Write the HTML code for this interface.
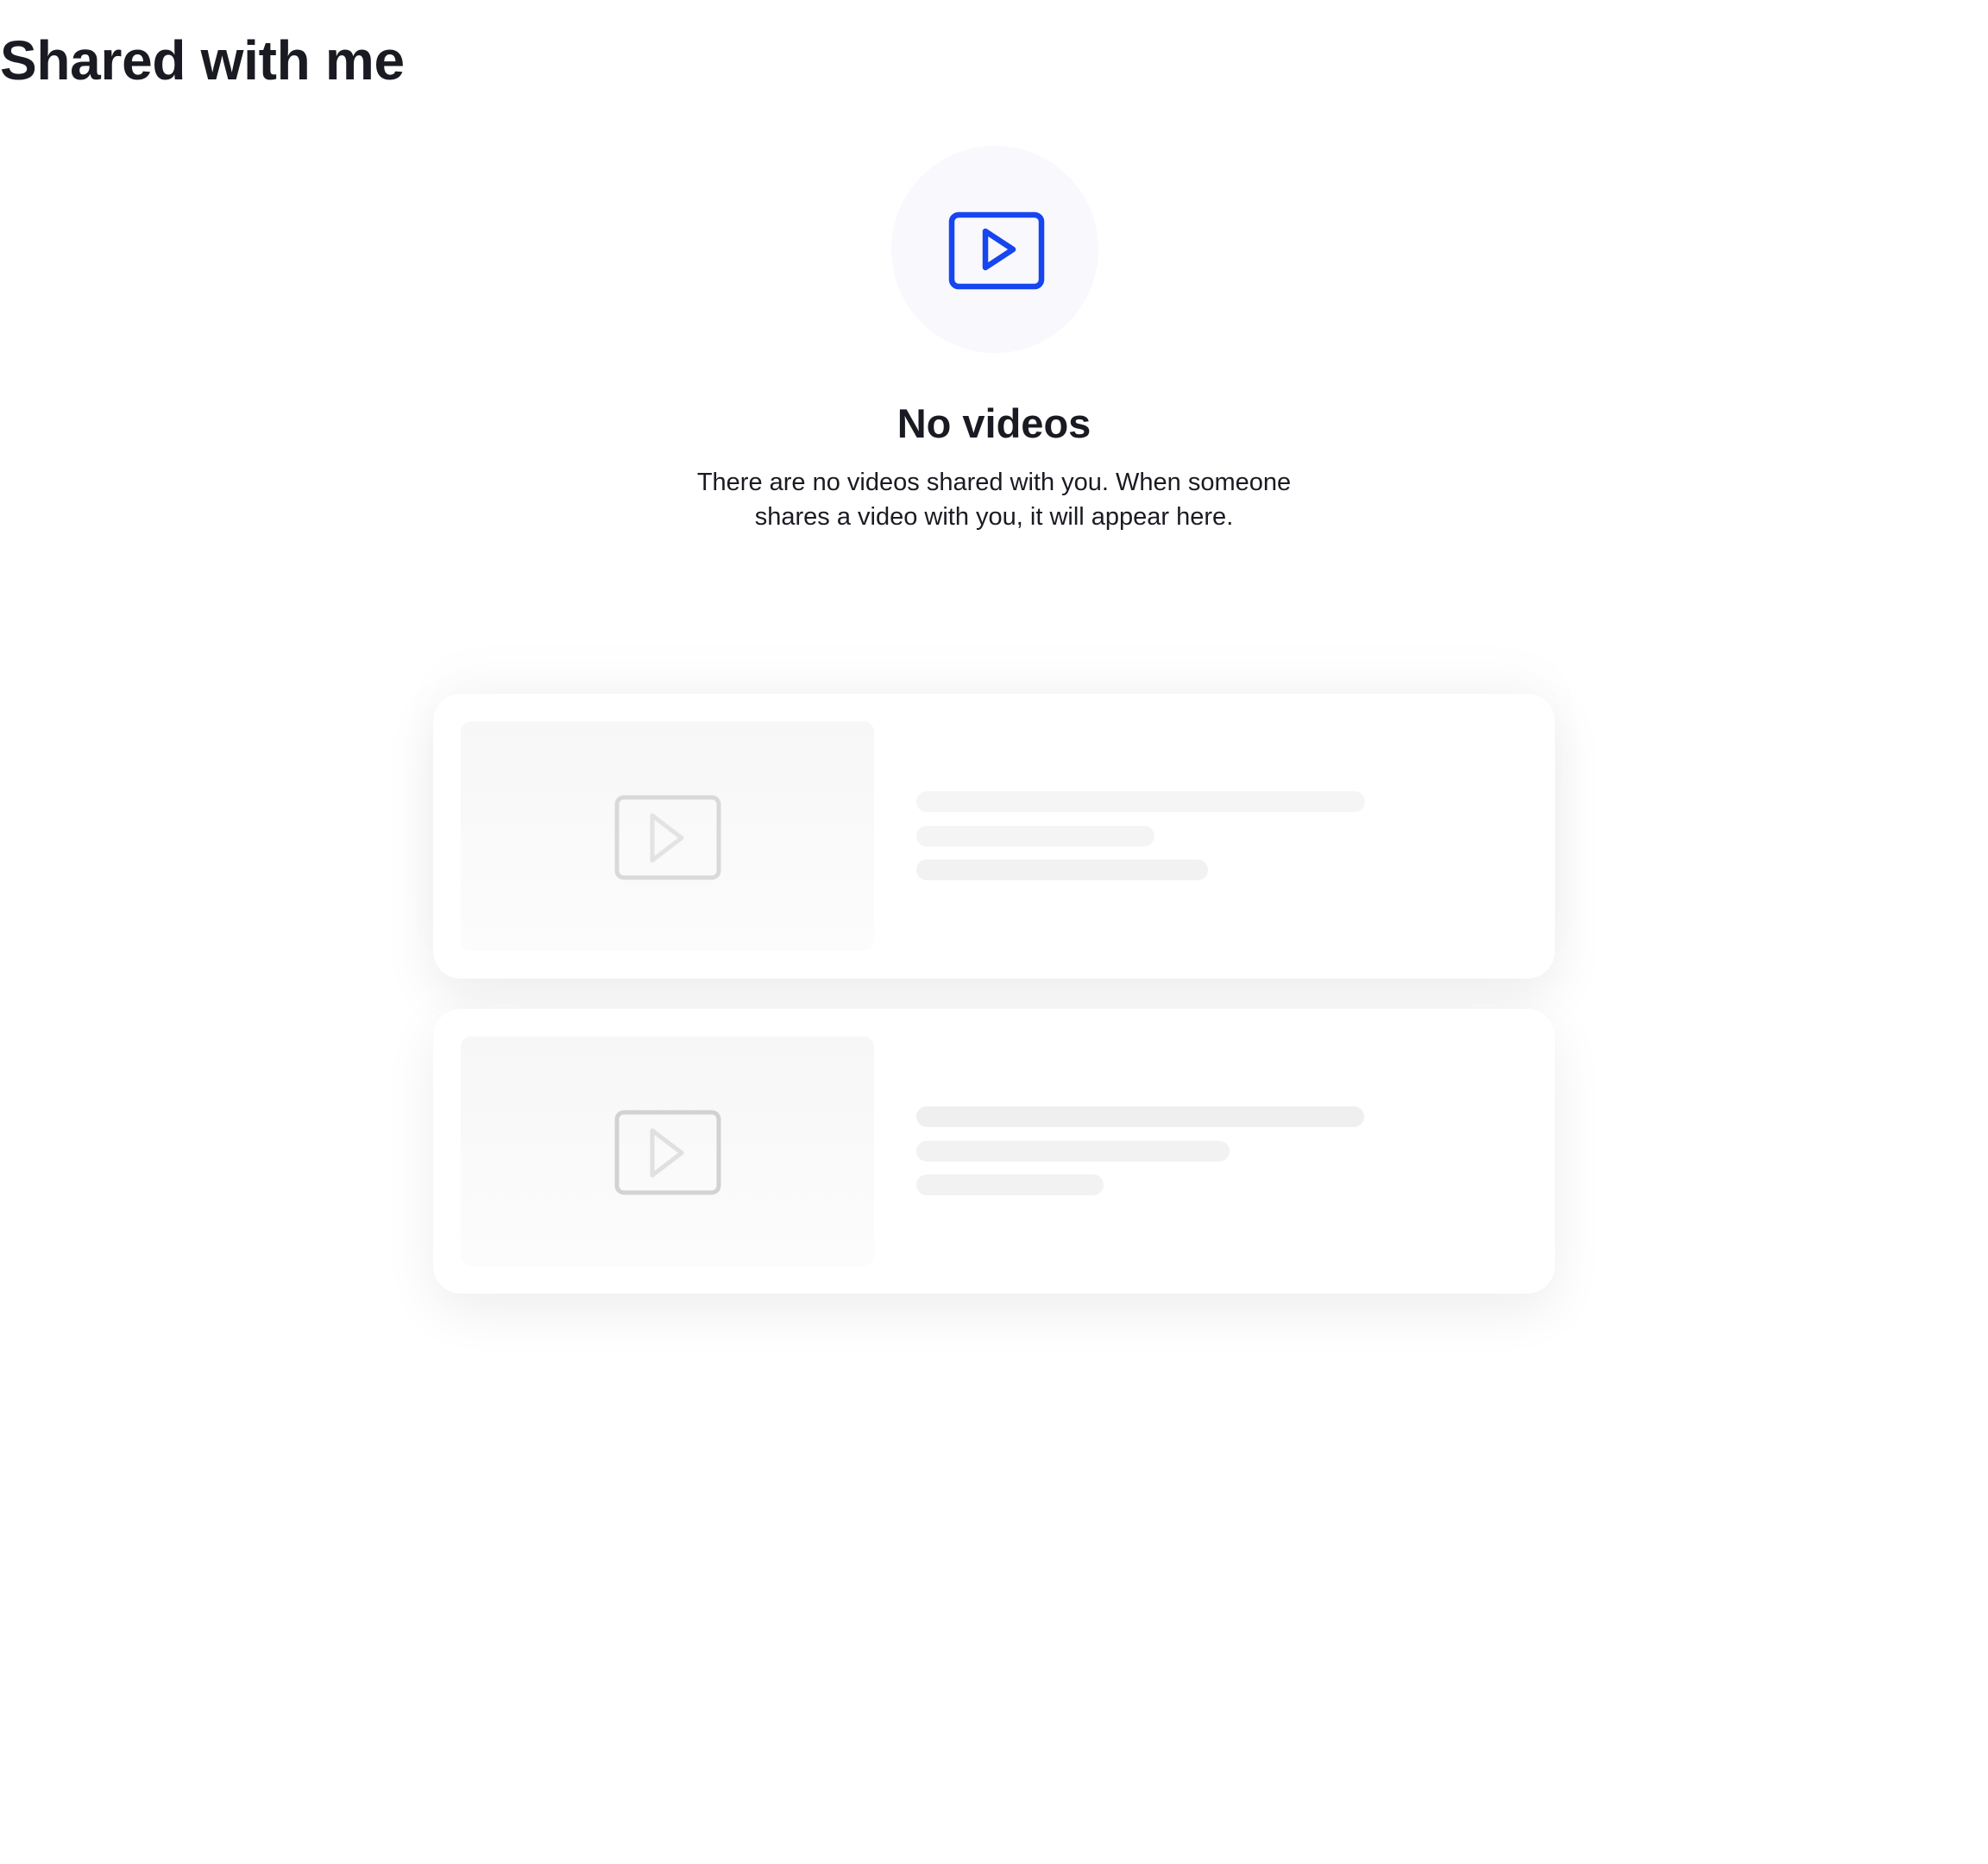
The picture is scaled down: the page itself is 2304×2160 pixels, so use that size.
<!DOCTYPE html>
<html><head><meta charset="utf-8"><style>
body{margin:0;width:2304px;height:2160px;background:#fff;position:relative;overflow:hidden;font-family:"Liberation Sans",sans-serif;color:#1a1a22}
h1{position:absolute;left:0;top:33px;margin:0;font-size:64px;font-weight:700;letter-spacing:-0.3px}
.circle{position:absolute;left:1033px;top:169px;width:240px;height:240px;border-radius:50%;background:#f8f8fd}
.t{position:absolute;left:0;width:2304px;text-align:center}
.card{position:absolute;left:502px;width:1300px;height:330px;border-radius:32px;background:#fff;box-shadow:0 20px 60px rgba(0,0,0,0.07)}
.thumb{position:absolute;left:32px;top:32px;width:479px;height:266px;border-radius:12px;background:linear-gradient(#f7f7f7,#fcfcfc)}
.bar{position:absolute;left:560px;height:24px;border-radius:12px;background:#f2f2f2}
</style></head><body>
<h1>Shared with me</h1>
<div class="circle"></div>
<svg style="position:absolute;left:1090px;top:236px" width="130" height="110"><rect x="13" y="13" width="104" height="83" rx="8" fill="none" stroke="#1746f0" stroke-width="6.5"/><path d="M52 32 L84 53 L52 74 Z" fill="none" stroke="#1746f0" stroke-width="6.5" stroke-linejoin="round"/></svg>
<div class="t" style="top:463px;font-size:47px;font-weight:700">No videos</div>
<div class="t" style="top:539px;font-size:29px;line-height:40px">There are no videos shared with you. When someone<br>shares a video with you, it will appear here.</div>
<div class="card" style="top:804px;box-shadow:0 20px 60px rgba(0,0,0,0.08),0 -30px 60px rgba(0,0,0,0.02)">
<div class="thumb"><svg style="position:absolute;left:176px;top:83px" width="130" height="104"><rect x="5" y="5" width="118" height="93" rx="8" fill="none" stroke="#d9d9d9" stroke-width="5"/><path d="M46 26 L80 52 L46 78 Z" fill="none" stroke="#e3e3e3" stroke-width="5" stroke-linejoin="round"/></svg></div>
<div class="bar" style="top:113px;width:520px;background:#f5f5f5"></div>
<div class="bar" style="top:153px;width:276px;background:#f4f4f4"></div>
<div class="bar" style="top:192px;width:338px"></div>
</div>
<div class="card" style="top:1169px">
<div class="thumb"><svg style="position:absolute;left:176px;top:83px" width="130" height="104"><rect x="5" y="5" width="118" height="93" rx="8" fill="none" stroke="#d2d2d2" stroke-width="5"/><path d="M46 26 L80 52 L46 78 Z" fill="none" stroke="#e0e0e0" stroke-width="5" stroke-linejoin="round"/></svg></div>
<div class="bar" style="top:113px;width:519px;background:#efefef"></div>
<div class="bar" style="top:153px;width:363px"></div>
<div class="bar" style="top:192px;width:217px"></div>
</div>
</body></html>
